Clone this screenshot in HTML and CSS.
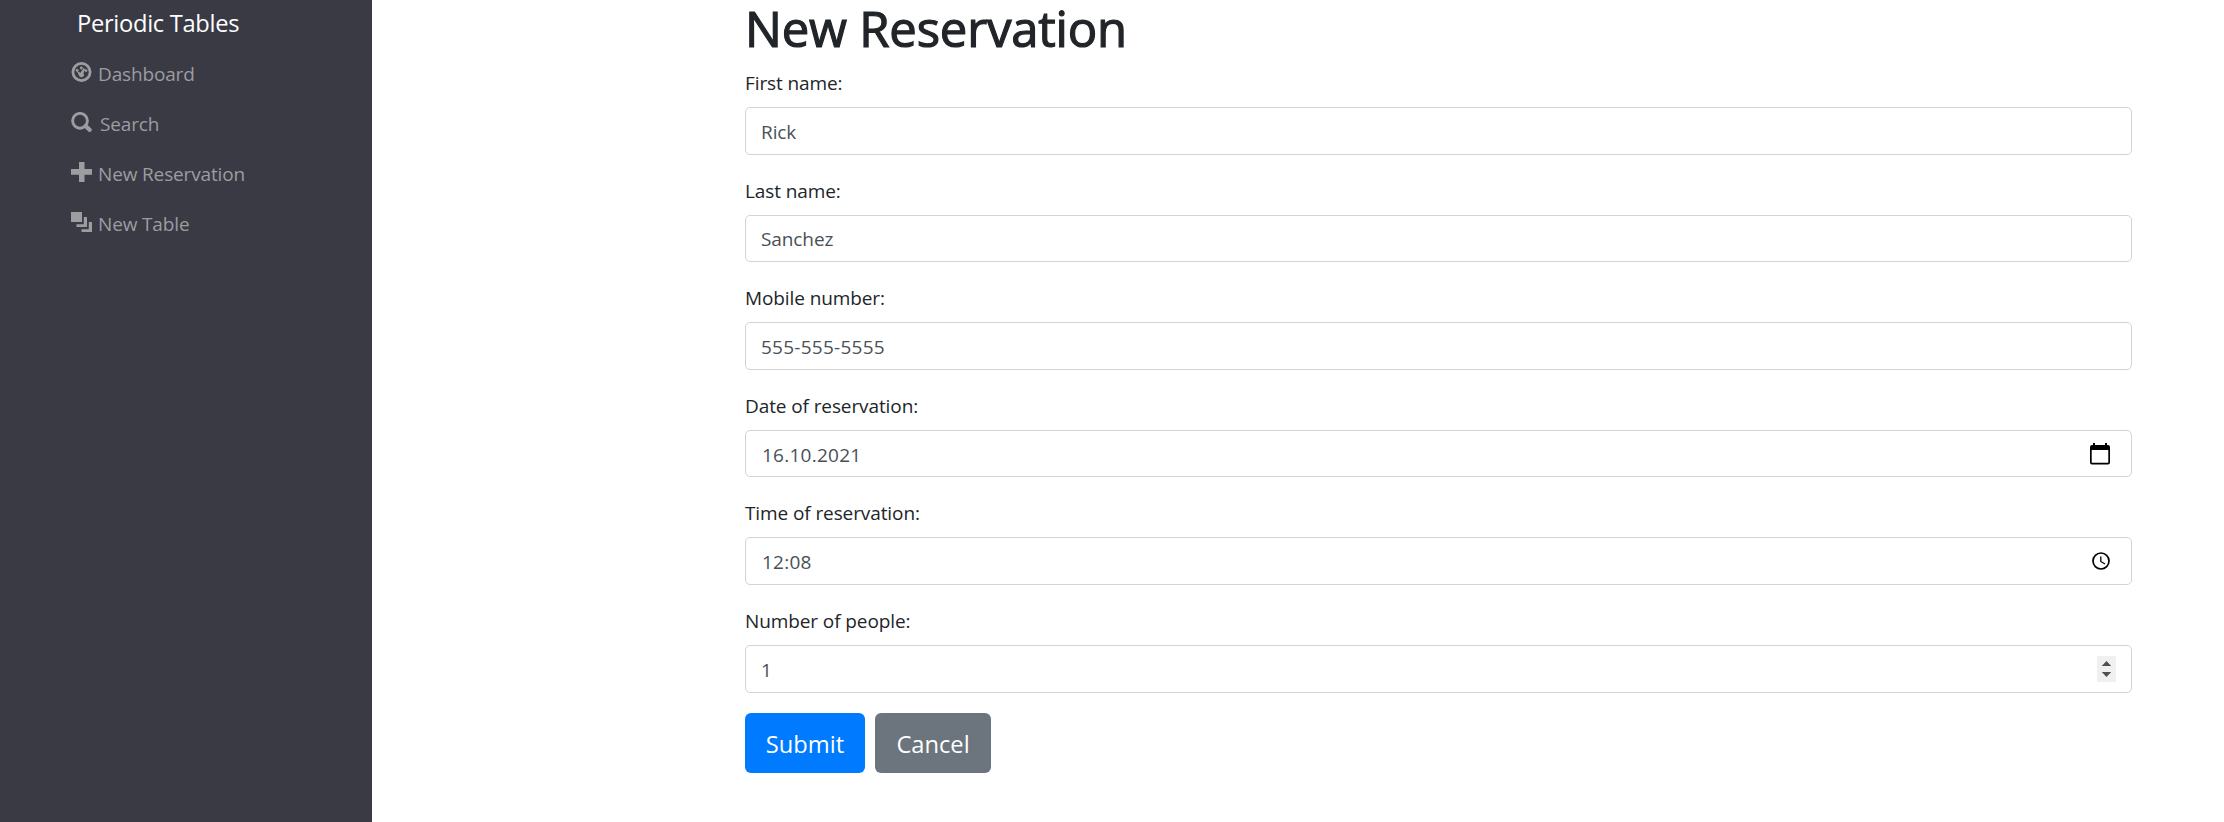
FILE: index.html
```html
<!DOCTYPE html>
<html lang="en">
<head>
<meta charset="utf-8">
<title>Periodic Tables</title>
<link rel="stylesheet" href="styles.css">
</head>
<body>
<div class="layout">
  <nav class="sidebar">
    <a class="brand">Periodic Tables</a>
    <ul class="nav">
      <li class="nav-item">
        <svg class="nav-icon" viewBox="0 0 21 20"><circle cx="10.5" cy="10" r="8.600" fill="none" stroke="currentColor" stroke-width="2.800"/><circle cx="6.200" cy="8.400" r="1.400"/><circle cx="10.300" cy="6" r="1.400"/><circle cx="15" cy="8.600" r="1.400"/><path d="M6 9.200l3.600 1.600 2.900-4.800 1.500.9-1.500 4.300.6 2.400-2.100 2-2.500-1z"/></svg>
        <span>Dashboard</span>
      </li>
      <li class="nav-item nav-item-search">
        <svg class="nav-icon" viewBox="0 0 21 20"><circle cx="9" cy="8.800" r="7.400" fill="none" stroke="currentColor" stroke-width="2.900"/><path d="M14.600 14l4 3.800" fill="none" stroke="currentColor" stroke-width="4.300" stroke-linecap="round"/></svg>
        <span>Search</span>
      </li>
      <li class="nav-item">
        <svg class="nav-icon" viewBox="0 0 21 20"><path d="M8 0h5.500v7H21v5.700h-7.500V20H8v-7.300H0V7h8z"/></svg>
        <span>New Reservation</span>
      </li>
      <li class="nav-item">
        <svg class="nav-icon" viewBox="0 0 21 20"><path d="M0 0h11v10H0zM12.800 5H16v10H5.500v-2.800h7.300zM17.800 10H21v10H10.500v-2.800h7.300z"/></svg>
        <span>New Table</span>
      </li>
    </ul>
  </nav>
  <main class="content">
    <h1 class="title">New Reservation</h1>
    <form class="form">
      <div class="form-group">
        <label class="label" for="first">First name:</label>
        <div class="control"><input class="field" id="first" type="text" value="Rick"></div>
      </div>
      <div class="form-group">
        <label class="label" for="last">Last name:</label>
        <div class="control"><input class="field" id="last" type="text" value="Sanchez"></div>
      </div>
      <div class="form-group">
        <label class="label" for="mobile">Mobile number:</label>
        <div class="control"><input class="field field-numeric" id="mobile" type="text" value="555-555-5555"></div>
      </div>
      <div class="form-group">
        <label class="label" for="date">Date of reservation:</label>
        <div class="control control-picker"><input class="field field-numeric" id="date" type="text" value="16.10.2021">
          <svg class="icon-date" viewBox="0 0 20 22"><path fill-rule="evenodd" d="M3 0h2v2h10V0h2v2h1q2 0 2 2v15.500q0 2-2 2H2q-2 0-2-2V4q0-2 2-2h1zM1.700 7v12.800h16.600V7z"/></svg>
        </div>
      </div>
      <div class="form-group">
        <label class="label" for="time">Time of reservation:</label>
        <div class="control control-picker"><input class="field field-numeric" id="time" type="text" value="12:08">
          <svg class="icon-time" viewBox="0 0 18 18"><circle cx="9" cy="9" r="8" fill="none" stroke="#000" stroke-width="1.700"/><path d="M8.800 4.500v5l4.200 2.500" fill="none" stroke="#000" stroke-width="1.300"/></svg>
        </div>
      </div>
      <div class="form-group">
        <label class="label" for="people">Number of people:</label>
        <div class="control control-number"><input class="field" id="people" type="text" value="1">
          <svg class="spinner" viewBox="0 0 19 26"><path d="M0 0h19v26H0z" fill="#f0f0f0"/><path d="M9.500 5l4.700 5H4.800zM9.500 21l4.700-5H4.800z" fill="#505050"/></svg>
        </div>
      </div>
      <div class="actions">
        <button class="btn btn-primary" type="button">Submit</button>
        <button class="btn btn-secondary" type="button">Cancel</button>
      </div>
    </form>
  </main>
</div>
</body>
</html>
```
FILE: styles.css
```css
* { box-sizing: border-box; }
body {
  margin: 0;
  background: #fff;
  color: #212529;
  font: 19px/30px "Open Sans", "Noto Sans", sans-serif;
  letter-spacing: -0.1px;
}
.layout { display: flex; height: 822px; }
.sidebar {
  width: 372px;
  flex: none;
  background: #3a3a44;
  padding: 4px 0 0 71px;
}
.brand {
  display: block;
  padding-left: 6px;
  color: #fff;
  font-size: 23.700px;
  line-height: 38px;
  letter-spacing: -0.300px;
}
.nav { list-style: none; margin: 15px 0 0; padding: 0; color: #9c9ca1; letter-spacing: -0.150px; }
.nav-item { display: flex; align-items: flex-start; gap: 6px; height: 30px; margin-bottom: 20px; line-height: 34px; }
.nav-item-search { gap: 8px; }
.nav-icon { width: 21px; height: 20px; margin-top: 5px; fill: currentColor; }
.content { flex: 1; padding: 0 92px 0 373px; }
.title {
  margin: 0 0 10px;
  font-size: 49px;
  line-height: 57px;
  font-weight: 400;
  letter-spacing: -0.200px;
  -webkit-text-stroke: 1.200px currentColor;
}
.form-group { margin-bottom: 20px; }
.label { display: block; height: 30px; margin-bottom: 10px; line-height: 32px; }
.control {
  display: flex;
  align-items: center;
  height: 47.600px;
  padding: 0 15px;
  border: 1px solid #ced4da;
  border-radius: 5px;
}
.field {
  flex: 1;
  min-width: 0;
  height: 32px;
  border: 0;
  padding: 2px 0 0;
  outline: 0;
  background: none;
  color: #495057;
  font: inherit;
  letter-spacing: inherit;
}
.field-numeric { letter-spacing: 0.250px; }
.control-picker { padding: 0 21px 0 16px; }
.icon-date { width: 20px; height: 22px; }
.icon-time { width: 18px; height: 18px; }
.spinner { width: 19px; height: 26px; }
.actions { display: flex; gap: 10px; }
.btn {
  height: 60px;
  border: 0;
  border-radius: 6px;
  padding: 2px 0 0;
  color: #fff;
  font: inherit;
  font-size: 23.700px;
}
.btn-primary { width: 120px; background: #007bff; }
.btn-secondary { width: 116px; background: #6c757d; }
```
